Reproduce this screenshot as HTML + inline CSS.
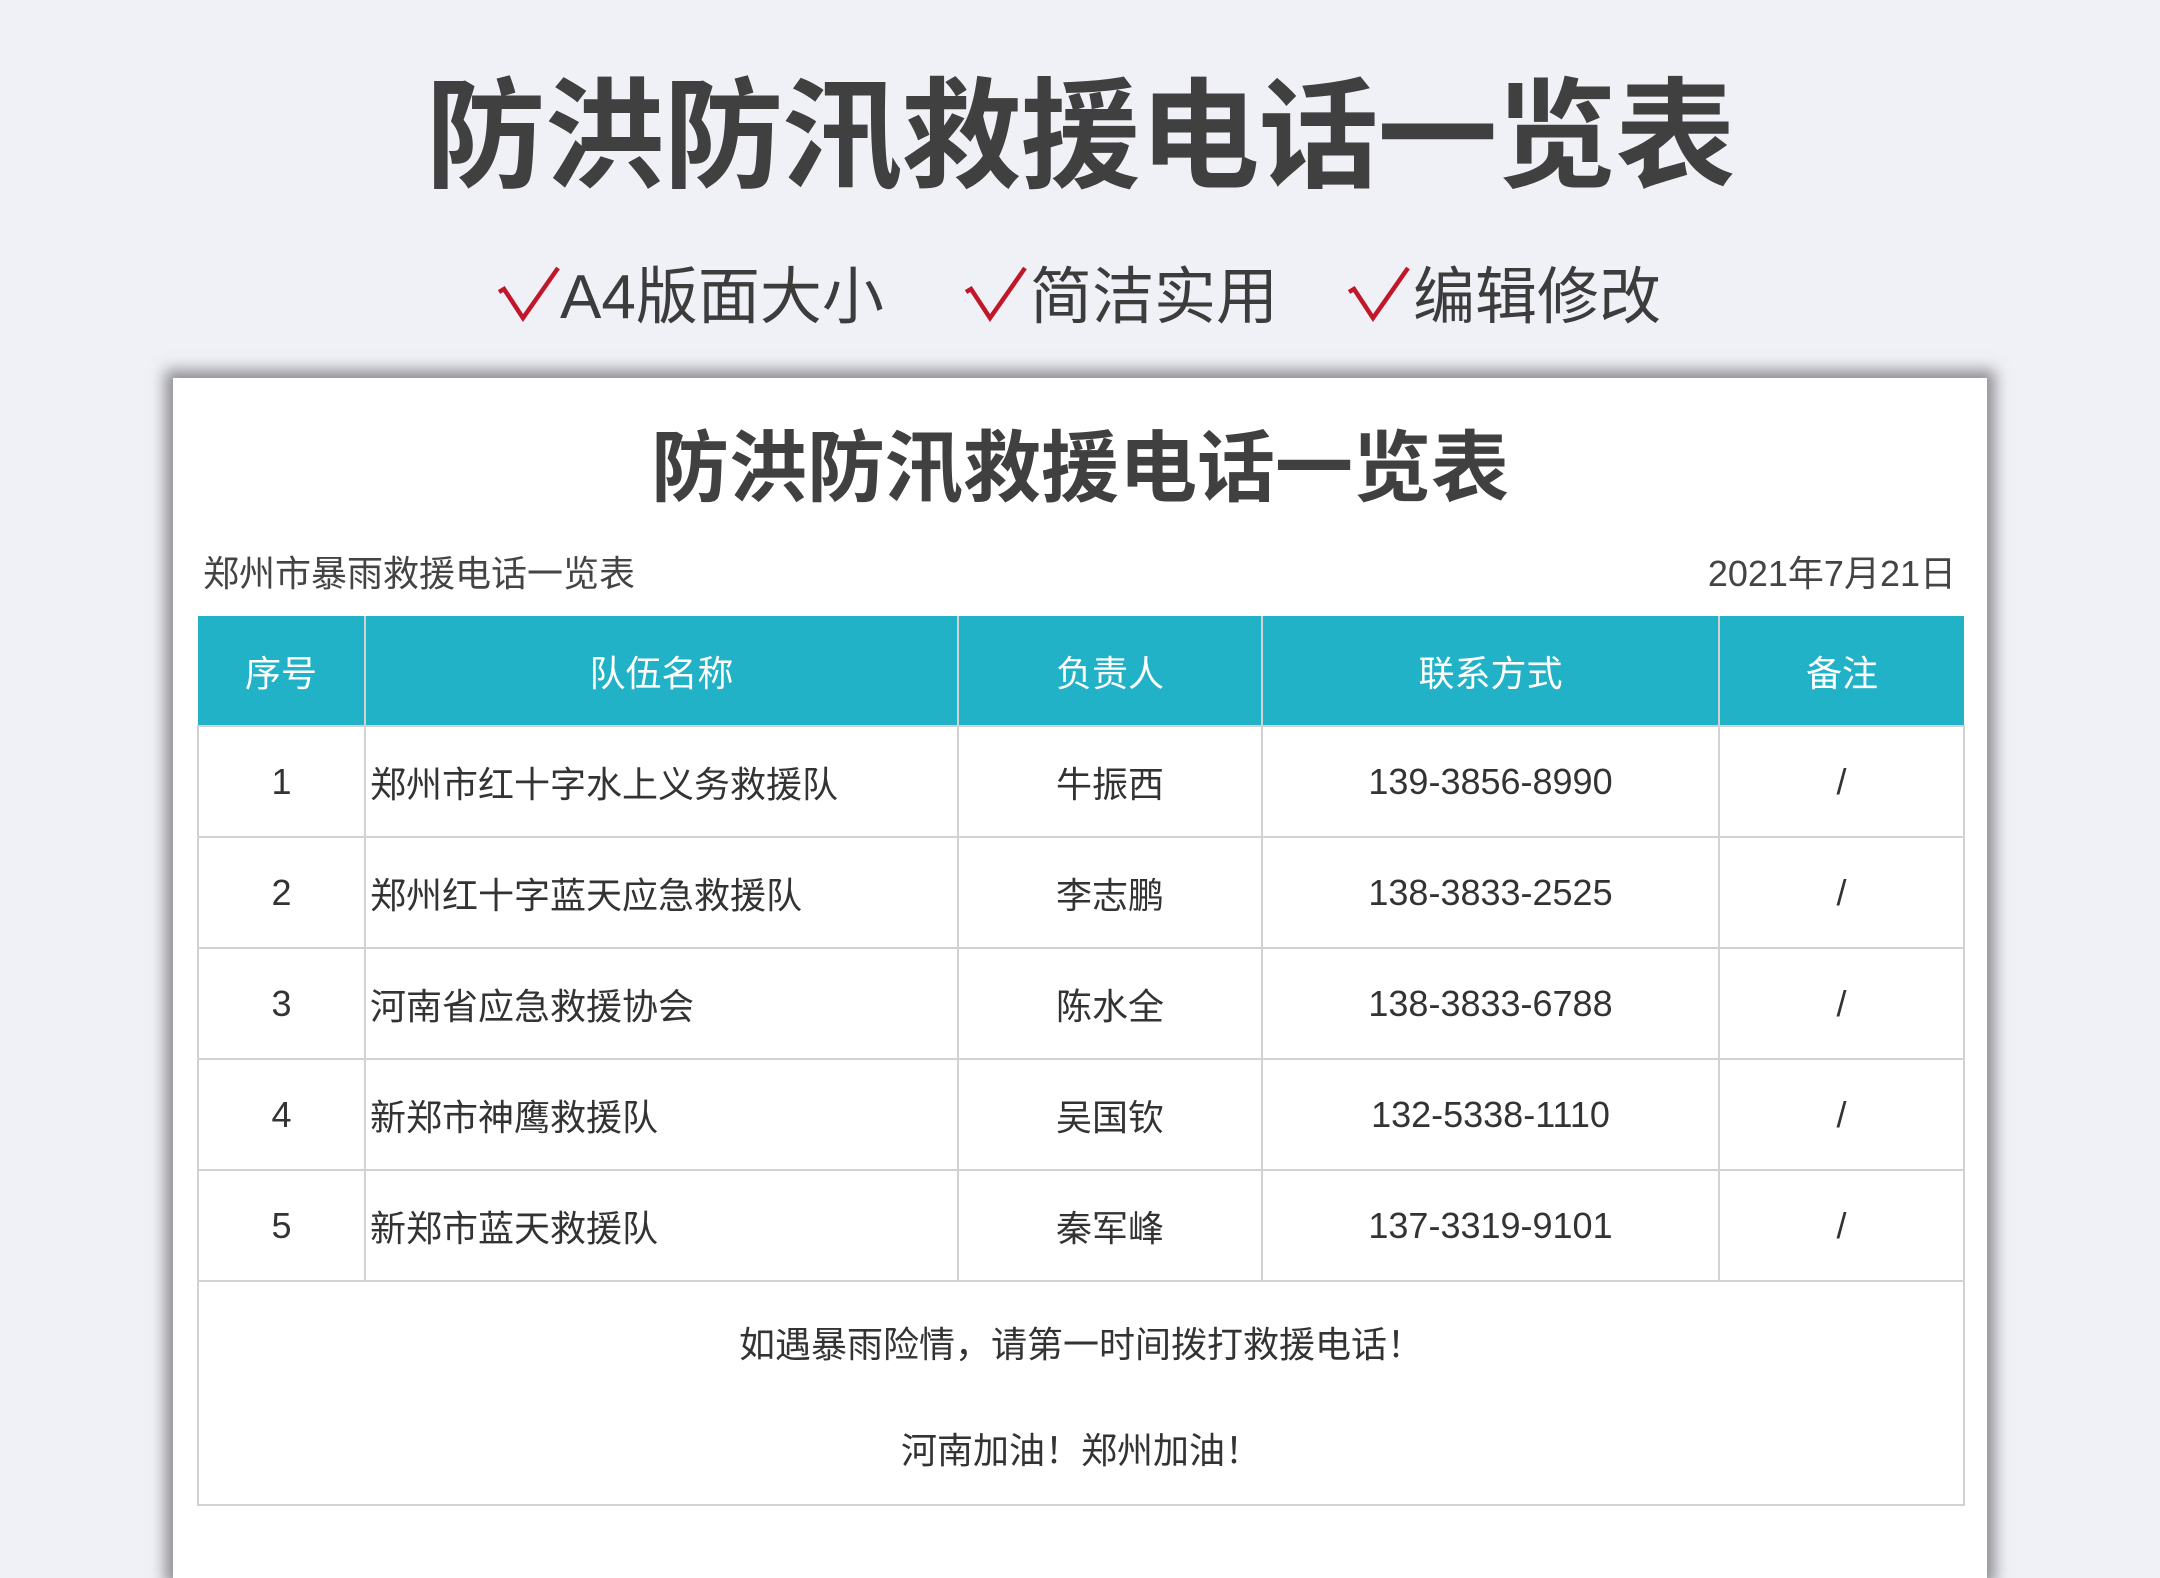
<!DOCTYPE html>
<html><head><meta charset="utf-8"><style>
*{margin:0;padding:0;box-sizing:border-box}
body{width:2160px;height:1528px;background:#f0f1f6;position:relative;overflow:hidden;font-family:"Liberation Sans","Noto Sans CJK SC",sans-serif;color:#3a3a3a}
.a{position:absolute;white-space:nowrap}
.title{left:0;width:2160px;top:62px;text-align:center;font-size:120px;line-height:150px;font-weight:bold;color:#404040;letter-spacing:-1px}
.sub{top:262px;font-size:62px;line-height:72px;color:#3c3c3c}
.paper{left:173px;top:378px;width:1814px;height:1200px;background:#fff;box-shadow:0 0 14px 8px rgba(110,110,115,.75)}
.it{left:173px;width:1814px;top:418px;text-align:center;font-size:78px;line-height:100px;font-weight:bold;color:#404040}
.sh{top:550px;font-size:36px;line-height:48px;color:#444}
table{position:absolute;left:197px;top:616px;border-collapse:collapse;font-size:36px;color:#333}
td{border:2px solid #d2d2d2;text-align:center;height:111px;padding:0}
th{background:#22b2c8;color:#fff;font-weight:normal;height:110px;border:2px solid #d2d2d2;border-top:none;border-bottom:none}
th+th{border-left:2px solid #e0e0e0}
th:first-child{border-left:none}th:last-child{border-right:none}
td.l{text-align:left;padding-left:4px}
td.f{height:222px;line-height:106px;padding-top:10px}
</style></head><body>
<div class="a title">防洪防汛救援电话一览表</div>
<svg class="a" style="left:0;top:0" width="2160" height="400">
<g fill="none" stroke="#c0182a" stroke-width="4.5" stroke-linejoin="miter">
<polyline points="499,292 504,289 523,318 558,268"/>
<polyline points="966,292 971,289 990,318 1025,268"/>
<polyline points="1349,292 1354,289 1373,318 1408,268"/>
</g></svg>
<div class="a sub" style="left:560px">A4版面大小</div>
<div class="a sub" style="left:1030px">简洁实用</div>
<div class="a sub" style="left:1413px">编辑修改</div>
<div class="a paper"></div>
<div class="a it">防洪防汛救援电话一览表</div>
<div class="a sh" style="left:203px">郑州市暴雨救援电话一览表</div>
<div class="a sh" style="right:204px">2021年7月21日</div>
<table>
<colgroup><col style="width:167px"><col style="width:593px"><col style="width:304px"><col style="width:457px"><col style="width:245px"></colgroup>
<tr><th>序号</th><th>队伍名称</th><th>负责人</th><th>联系方式</th><th>备注</th></tr>
<tr><td>1</td><td class="l">郑州市红十字水上义务救援队</td><td>牛振西</td><td>139-3856-8990</td><td>/</td></tr>
<tr><td>2</td><td class="l">郑州红十字蓝天应急救援队</td><td>李志鹏</td><td>138-3833-2525</td><td>/</td></tr>
<tr><td>3</td><td class="l">河南省应急救援协会</td><td>陈水全</td><td>138-3833-6788</td><td>/</td></tr>
<tr><td>4</td><td class="l">新郑市神鹰救援队</td><td>吴国钦</td><td>132-5338-1110</td><td>/</td></tr>
<tr><td>5</td><td class="l">新郑市蓝天救援队</td><td>秦军峰</td><td>137-3319-9101</td><td>/</td></tr>
<tr><td colspan="5" class="f">如遇暴雨险情，请第一时间拨打救援电话！<br>河南加油！郑州加油！</td></tr>
</table>
</body></html>
